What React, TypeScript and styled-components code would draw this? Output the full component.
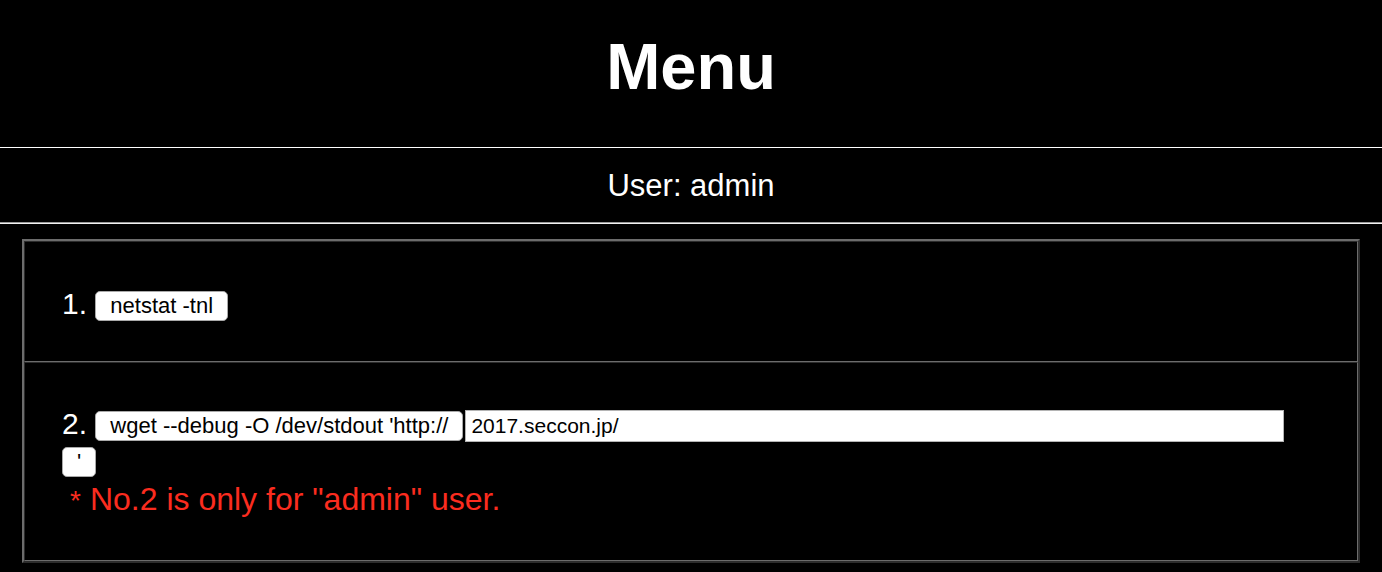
import React from 'react';
import styled, { createGlobalStyle } from 'styled-components';

const GlobalStyle = createGlobalStyle`
  html, body {
    margin: 0;
    padding: 0;
    background: #000;
  }
  body {
    color: #fff;
    font-family: "Liberation Sans", Arial, sans-serif;
  }
`;

const Page = styled.div`
  background: #000;
  min-height: 572px;
`;

const Title = styled.h1`
  margin: 0;
  padding-top: 30px;
  font-size: 65px;
  font-weight: bold;
  text-align: center;
  line-height: 74px;
  height: 117px;
`;

const Rule = styled.hr<{ $double?: boolean }>`
  margin: 0;
  border: none;
  height: 0;
  border-top: 1px solid ${(p) => (p.$double ? '#9a9a9a' : '#fff')};
  border-bottom: ${(p) => (p.$double ? '1px solid #f2f2f2' : 'none')};
`;

const UserLine = styled.p`
  margin: 0;
  padding: 20px 0 19px;
  font-size: 31px;
  line-height: 35px;
  text-align: center;
`;

const MenuTable = styled.table`
  margin: 15px 22px 0;
  width: calc(100% - 44px);
  border-collapse: separate;
  border-spacing: 0;
  border-style: solid;
  border-width: 2px;
  border-color: #6c6c6c #2c2c2c #2c2c2c #6c6c6c;
`;

const Cell = styled.td<{ $tall?: boolean }>`
  border-style: solid;
  border-width: 1px;
  border-color: #2c2c2c #6c6c6c #6c6c6c #2c2c2c;
  padding: ${(p) => (p.$tall ? '43px 37px 41px' : '44px 37px 39px')};
  font-size: 30px;
  line-height: 36px;
  color: #fff;
  vertical-align: top;
`;

const CmdButton = styled.button`
  height: 30px;
  padding: 0 14px;
  margin: 0;
  background: #fff;
  color: #000;
  border: 1px solid #a9a9a9;
  border-radius: 5px;
  font-family: "Liberation Sans", Arial, sans-serif;
  font-size: 22px;
  line-height: 28px;
  vertical-align: middle;
`;

const UrlInput = styled.input`
  box-sizing: border-box;
  width: 819px;
  height: 32px;
  margin: 0 0 0 2px;
  padding: 0 5px;
  background: #fff;
  color: #000;
  border: 1px solid #b4b4b4;
  border-radius: 0;
  font-family: "Liberation Sans", Arial, sans-serif;
  font-size: 21px;
  vertical-align: middle;
`;

const Notice = styled.div`
  color: #fb2c1f;
  font-size: 32px;
  padding-left: 8px;
  margin-top: 3px;
`;

const Star = styled.span`
  font-size: 28px;
  margin-right: 9px;
`;

export default function App() {
  return (
    <Page>
      <GlobalStyle />
      <Title>Menu</Title>
      <Rule />
      <UserLine>User: admin</UserLine>
      <Rule $double />
      <MenuTable>
        <tbody>
          <tr>
            <Cell>
              1. <CmdButton>netstat -tnl</CmdButton>
            </Cell>
          </tr>
          <tr>
            <Cell $tall>
              2. <CmdButton>wget --debug -O /dev/stdout 'http://</CmdButton>
              <UrlInput defaultValue="2017.seccon.jp/" />{' '}
              <CmdButton>'</CmdButton>
              <Notice>
                <Star>*</Star>No.2 is only for "admin" user.
              </Notice>
            </Cell>
          </tr>
        </tbody>
      </MenuTable>
    </Page>
  );
}
